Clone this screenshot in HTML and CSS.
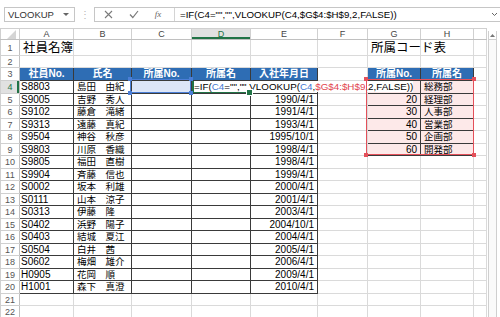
FILE: index.html
```html
<!DOCTYPE html>
<html lang="ja">
<head>
    <meta charset="UTF-8">
    <meta name="viewport" content="width=device-width, initial-scale=1.0">
    <title>社員名簿 - VLOOKUP</title>
    <link rel="stylesheet" href="styles.css">
</head>
<body>
    <div class="excel">
        <!-- 数式バー -->
        <div class="formula-bar">
            <div class="name-box">
                <span>VLOOKUP</span>
                <span class="name-arrow"></span>
            </div>
            <span class="grip">⋮</span>
            <div class="formula-box">
                <div class="formula-btns">
                    <span class="fb-btn">
                        <svg width="9" height="9" viewBox="0 0 9 9"><path d="M1 1L8 8M8 1L1 8" stroke="#7a7a7a" stroke-width="1.1" fill="none"/></svg>
                    </span>
                    <span class="fb-btn">
                        <svg width="10" height="9" viewBox="0 0 10 9"><path d="M1 4.5L3.8 7.5L9 1" stroke="#7a7a7a" stroke-width="1.2" fill="none"/></svg>
                    </span>
                    <span class="fb-btn fx">fx</span>
                </div>
                <div class="formula-text">=IF(C4="","",VLOOKUP(C4,$G$4:$H$9,2,FALSE))</div>
                <span class="formula-expand">
                    <svg width="7" height="5" viewBox="0 0 7 5"><path d="M1 1L3.5 3.5L6 1" stroke="#666" stroke-width="1" fill="none"/></svg>
                </span>
            </div>
        </div>

        <!-- シート -->
        <div class="sheet-area">
            <div class="sheet">
                <table class="grid">
                    <colgroup>
                        <col style="width:19px">
                        <col style="width:54px">
                        <col style="width:58px">
                        <col style="width:60px">
                        <col style="width:59px">
                        <col style="width:67px">
                        <col style="width:50px">
                        <col style="width:53px">
                        <col style="width:53px">
                        <col style="width:13px">
                    </colgroup>
                    <tr class="col-head">
                        <td class="corner"><div class="corner-tri"></div></td>
                        <td>A</td><td>B</td><td>C</td><td class="sel">D</td><td>E</td><td>F</td><td>G</td><td>H</td><td></td>
                    </tr>
                    <tr class="r1">
                        <td class="rh">1</td>
                        <td class="title">社員名簿</td><td></td><td></td><td></td><td></td><td></td>
                        <td class="title">所属コード表</td><td></td><td></td>
                    </tr>
                    <tr class="r2">
                        <td class="rh">2</td>
                        <td></td><td></td><td></td><td></td><td></td><td></td><td></td><td></td><td></td>
                    </tr>
                    <tr class="r3">
                        <td class="rh">3</td>
                        <td class="hd">社員No.</td><td class="hd">氏名</td><td class="hd">所属No.</td><td class="hd">所属名</td><td class="hd">入社年月日</td>
                        <td></td>
                        <td class="hd">所属No.</td><td class="hd">所属名</td><td></td>
                    </tr>
                    <tr class="h13">
                        <td class="rh sel">4</td>
                        <td class="t">S8803</td><td class="t jp">島田　由紀</td><td class="t picked"></td>
                        <td class="t active"><span class="edit">=IF(<span class="ref-b">C4</span>="","",VLOOKUP(<span class="ref-b">C4</span>,<span class="ref-r">$G$4:$H$9</span>,2,FALSE))</span></td>
                        <td class="t"></td><td></td>
                        <td class="t ref num"></td><td class="t ref jp">総務部</td><td></td>
                    </tr>
                    <tr class="h12">
                        <td class="rh">5</td>
                        <td class="t">S9005</td><td class="t jp">吉野　秀人</td><td class="t"></td><td class="t"></td><td class="t num">1990/4/1</td><td></td>
                        <td class="t ref num">20</td><td class="t ref jp">経理部</td><td></td>
                    </tr>
                    <tr class="h13">
                        <td class="rh">6</td>
                        <td class="t">S9102</td><td class="t jp">藤倉　滝緒</td><td class="t"></td><td class="t"></td><td class="t num">1991/4/1</td><td></td>
                        <td class="t ref num">30</td><td class="t ref jp">人事部</td><td></td>
                    </tr>
                    <tr class="h12">
                        <td class="rh">7</td>
                        <td class="t">S9313</td><td class="t jp">遠藤　真紀</td><td class="t"></td><td class="t"></td><td class="t num">1993/4/1</td><td></td>
                        <td class="t ref num">40</td><td class="t ref jp">営業部</td><td></td>
                    </tr>
                    <tr class="h13">
                        <td class="rh">8</td>
                        <td class="t">S9504</td><td class="t jp">神谷　秋彦</td><td class="t"></td><td class="t"></td><td class="t num">1995/10/1</td><td></td>
                        <td class="t ref num">50</td><td class="t ref jp">企画部</td><td></td>
                    </tr>
                    <tr class="h12">
                        <td class="rh">9</td>
                        <td class="t">S9803</td><td class="t jp">川原　香織</td><td class="t"></td><td class="t"></td><td class="t num">1998/4/1</td><td></td>
                        <td class="t ref num">60</td><td class="t ref jp">開発部</td><td></td>
                    </tr>
                    <tr class="h13">
                        <td class="rh">10</td>
                        <td class="t">S9805</td><td class="t jp">福田　直樹</td><td class="t"></td><td class="t"></td><td class="t num">1998/4/1</td>
                        <td></td><td></td><td></td><td></td>
                    </tr>
                    <tr class="h12">
                        <td class="rh">11</td>
                        <td class="t">S9904</td><td class="t jp">斉藤　信也</td><td class="t"></td><td class="t"></td><td class="t num">1999/4/1</td>
                        <td></td><td></td><td></td><td></td>
                    </tr>
                    <tr class="h13">
                        <td class="rh">12</td>
                        <td class="t">S0002</td><td class="t jp">坂本　利雄</td><td class="t"></td><td class="t"></td><td class="t num">2000/4/1</td>
                        <td></td><td></td><td></td><td></td>
                    </tr>
                    <tr class="h12">
                        <td class="rh">13</td>
                        <td class="t">S0111</td><td class="t jp">山本　涼子</td><td class="t"></td><td class="t"></td><td class="t num">2001/4/1</td>
                        <td></td><td></td><td></td><td></td>
                    </tr>
                    <tr class="h13">
                        <td class="rh">14</td>
                        <td class="t">S0313</td><td class="t jp">伊藤　隆</td><td class="t"></td><td class="t"></td><td class="t num">2003/4/1</td>
                        <td></td><td></td><td></td><td></td>
                    </tr>
                    <tr class="h12">
                        <td class="rh">15</td>
                        <td class="t">S0402</td><td class="t jp">浜野　陽子</td><td class="t"></td><td class="t"></td><td class="t num">2004/10/1</td>
                        <td></td><td></td><td></td><td></td>
                    </tr>
                    <tr class="h13">
                        <td class="rh">16</td>
                        <td class="t">S0403</td><td class="t jp">結城　夏江</td><td class="t"></td><td class="t"></td><td class="t num">2004/4/1</td>
                        <td></td><td></td><td></td><td></td>
                    </tr>
                    <tr class="h12">
                        <td class="rh">17</td>
                        <td class="t">S0504</td><td class="t jp">白井　茜</td><td class="t"></td><td class="t"></td><td class="t num">2005/4/1</td>
                        <td></td><td></td><td></td><td></td>
                    </tr>
                    <tr class="h13">
                        <td class="rh">18</td>
                        <td class="t">S0602</td><td class="t jp">梅畑　雄介</td><td class="t"></td><td class="t"></td><td class="t num">2006/4/1</td>
                        <td></td><td></td><td></td><td></td>
                    </tr>
                    <tr class="h12">
                        <td class="rh">19</td>
                        <td class="t">H0905</td><td class="t jp">花岡　順</td><td class="t"></td><td class="t"></td><td class="t num">2009/4/1</td>
                        <td></td><td></td><td></td><td></td>
                    </tr>
                    <tr class="h13">
                        <td class="rh">20</td>
                        <td class="t">H1001</td><td class="t jp">森下　真澄</td><td class="t"></td><td class="t"></td><td class="t num">2010/4/1</td>
                        <td></td><td></td><td></td><td></td>
                    </tr>
                    <tr class="h12">
                        <td class="rh">21</td>
                        <td></td><td></td><td></td><td></td><td></td><td></td><td></td><td></td><td></td>
                    </tr>
                    <tr class="h13">
                        <td class="rh">22</td>
                        <td></td><td></td><td></td><td></td><td></td><td></td><td></td><td></td><td></td>
                    </tr>
                </table>

                <!-- 参照セルの枠 -->
                <div class="ref-box ref-c4">
                    <span class="hdl tl"></span><span class="hdl tr"></span><span class="hdl bl"></span><span class="hdl br"></span>
                </div>
                <div class="ref-box ref-range">
                    <span class="hdl tl"></span><span class="hdl tr"></span><span class="hdl bl"></span><span class="hdl br"></span>
                </div>
            </div>

            <div class="vscroll">
                <div class="vscroll-track">
                    <div class="vscroll-up">
                        <svg width="5" height="3" viewBox="0 0 5 3"><path d="M0 3L2.5 0L5 3Z" fill="#777"/></svg>
                    </div>
                </div>
            </div>
        </div>
    </div>
</body>
</html>
```

FILE: styles.css
```css
* {
    margin: 0;
    padding: 0;
    box-sizing: border-box;
}

body {
    font-family: "Liberation Sans", "Noto Sans CJK JP", sans-serif;
    font-size: 10px;
    color: #000;
    background-color: #fff;
    overflow: hidden;
}

.excel {
    width: 500px;
    height: 317px;
    display: flex;
    flex-direction: column;
    overflow: hidden;
}

/* 数式バー */
.formula-bar {
    height: 28px;
    flex-shrink: 0;
    display: flex;
    align-items: center;
    padding-left: 4px;
}

.name-box {
    width: 71px;
    height: 15px;
    border: 1px solid #c6c6c6;
    display: flex;
    align-items: center;
    justify-content: space-between;
    padding: 0 5px 0 3px;
    color: #333;
    font-size: 9.5px;
}

.name-arrow {
    width: 0;
    height: 0;
    border-left: 3px solid transparent;
    border-right: 3px solid transparent;
    border-top: 3px solid #666;
}

.grip {
    width: 19px;
    text-align: center;
    color: #b5b5b5;
    font-size: 10px;
}

.formula-box {
    flex: 1;
    height: 15px;
    border: 1px solid #c6c6c6;
    border-right: none;
    display: flex;
    align-items: center;
}

.formula-btns {
    width: 80px;
    height: 100%;
    display: flex;
    align-items: center;
    border-right: 1px solid #d4d4d4;
}

.fb-btn {
    width: 26px;
    display: flex;
    justify-content: center;
    align-items: center;
}

.fb-btn.fx {
    width: 22px;
    font-family: "Liberation Serif", serif;
    font-style: italic;
    font-size: 9px;
    color: #666;
}

.formula-text {
    flex: 1;
    padding-left: 5px;
    font-size: 9.7px;
    white-space: nowrap;
    overflow: hidden;
}

.formula-expand {
    width: 12px;
    display: flex;
    justify-content: center;
}

/* シート */
.sheet-area {
    flex: 1;
    display: flex;
    min-height: 0;
}

.sheet {
    width: 486px;
    position: relative;
}

.grid {
    width: 486px;
    table-layout: fixed;
    border-collapse: collapse;
}

.grid td {
    border: 1px solid #dadada;
    padding: 0 2px;
    line-height: 10px;
    white-space: nowrap;
    overflow: visible;
    vertical-align: middle;
}

.col-head {
    height: 11px;
}

.col-head td {
    text-align: center;
    color: #444;
    font-size: 9px;
    border-color: #d0d0d0;
    border-bottom-color: #c0c0c0;
}

.col-head td.sel {
    background-color: #e1e1e1;
    color: #217346;
    box-shadow: inset 0 -2px 0 #217346;
}

.corner {
    vertical-align: bottom !important;
}

.corner-tri {
    width: 0;
    height: 0;
    margin: 0 1px 0 auto;
    border-left: 9px solid transparent;
    border-bottom: 9px solid #d5d5d5;
}

.r1 { height: 16px; }
.r2 { height: 12px; }
.r3 { height: 13px; }
.h13 { height: 13px; }
.h12 { height: 12px; }

.grid td.rh {
    text-align: center;
    color: #555;
    font-size: 9px;
    padding: 0;
    border-color: #d0d0d0;
    border-right-color: #c0c0c0;
}

.grid td.rh.sel {
    background-color: #e1e1e1;
    color: #217346;
    box-shadow: inset -2px 0 0 #217346;
}

.grid td.title {
    font-size: 12.5px;
    line-height: 14px;
    vertical-align: bottom;
    padding-left: 3px;
}

.grid td.hd {
    background-color: #2e6db4;
    color: #fff;
    font-weight: bold;
    text-align: center;
    border: 1px solid #3a3a3a;
}

.grid td.t {
    border: 1px solid #3a3a3a;
    padding: 0 1px;
}

.grid td.jp {
    font-size: 9.5px;
    padding-left: 3px;
}

.grid td.num {
    text-align: right;
    padding-right: 3px;
}

.grid td.ref {
    background-color: #fde9e9;
}

.grid td.picked {
    background-color: #dce5f7;
}

.grid td.active {
    position: relative;
    box-shadow: inset 0 0 0 2px #217346;
    padding-left: 2px;
}

.grid td.active::after {
    content: "";
    position: absolute;
    right: -3px;
    bottom: -3px;
    width: 5px;
    height: 5px;
    background-color: #217346;
    border: 1px solid #fff;
}

.edit {
    background-color: #fff;
    font-size: 9.8px;
}

.ref-b {
    color: #3f77d3;
}

.ref-r {
    color: #e2444f;
}

/* 参照枠 */
.ref-box {
    position: absolute;
    pointer-events: none;
}

.ref-c4 {
    left: 130px;
    top: 51px;
    width: 61px;
    height: 14px;
    border: 1px solid #4a7ed6;
}

.ref-range {
    left: 366px;
    top: 51px;
    width: 108px;
    height: 76px;
    border: 1px solid #e4505a;
}

.hdl {
    position: absolute;
    width: 4px;
    height: 4px;
}

.ref-c4 .hdl { background-color: #4a7ed6; }
.ref-range .hdl { background-color: #e4505a; }

.hdl.tl { left: -3px; top: -3px; }
.hdl.tr { right: -3px; top: -3px; }
.hdl.bl { left: -3px; bottom: -3px; }
.hdl.br { right: -3px; bottom: -3px; }

/* スクロールバー */
.vscroll {
    width: 14px;
    padding: 3px 3px 0 2px;
}

.vscroll-track {
    height: 100%;
    border-left: 1px solid #cfcfcf;
    border-right: 1px solid #cfcfcf;
    background-color: #fafafa;
}

.vscroll-up {
    height: 9px;
    border-bottom: 1px solid #cfcfcf;
    display: flex;
    justify-content: center;
    align-items: center;
    background-color: #fff;
}
```
